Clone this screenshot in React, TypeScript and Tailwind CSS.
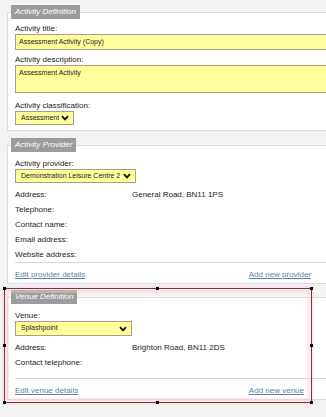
import React from 'react';

const font = { fontFamily: '"Liberation Sans", Arial, sans-serif' };

const Chevron: React.FC = () => (
  <svg width="8" height="6" viewBox="0 0 8 6" className="shrink-0">
    <path d="M1 1.2 L4 4.4 L7 1.2" fill="none" stroke="#111" strokeWidth="1.8" />
  </svg>
);

const Legend: React.FC<{ children: React.ReactNode }> = ({ children }) => (
  <legend className="ml-[-4px] h-[14px] px-[4px] bg-[#9c9c9c] text-white italic text-[8px] leading-[14px]">
    {children}
  </legend>
);

const Label: React.FC<{ children: React.ReactNode; className?: string }> = ({ children, className }) => (
  <div className={`h-[11px] text-[8px] leading-[12px] text-[#1c1c1c] ${className ?? ''}`}>{children}</div>
);

const Select: React.FC<{ value: string; width: string }> = ({ value, width }) => (
  <div className={`${width} flex items-center justify-between pl-[5px] pr-[4px] bg-[#ffff9c] border border-[#a79f8c] text-[7px] text-[#222]`}>
    <span className="truncate">{value}</span>
    <Chevron />
  </div>
);

const Row: React.FC<{ label: string; value?: string }> = ({ label, value }) => (
  <div className="grid grid-cols-[117px_1fr] h-[15px] text-[8px] leading-[15px] text-[#1c1c1c]">
    <span>{label}</span>
    <span>{value}</span>
  </div>
);

const Handle: React.FC<{ className: string }> = ({ className }) => (
  <span className={`absolute w-[3px] h-[3px] bg-black ${className}`} />
);

export default function App() {
  return (
    <div style={font} className="relative w-[326px] h-[417px] overflow-hidden bg-[#f3f3f3]">
      <div className="pt-[5px] pl-[7px] w-[345px]">
        {/* Activity Definition */}
        <fieldset className="border border-[#dcdcdc] bg-white pl-[7px] pb-[5px]">
          <Legend>Activity Definition</Legend>
          <Label className="mt-[4px]">Activity title:</Label>
          <div className="h-[16px] bg-[#ffff9c] border border-[#a79f8c] pl-[3px] text-[7px] leading-[14px] text-[#222]">
            Assessment Activity (Copy)
          </div>
          <Label className="mt-[4px]">Activity description:</Label>
          <div className="h-[28px] bg-[#ffff9c] border border-[#a79f8c] pl-[3px] pt-[2px] text-[7px] leading-[10px] text-[#222]">
            Assessment Activity
          </div>
          <Label className="mt-[7px]">Activity classification:</Label>
          <Select value="Assessment" width="w-[59px] h-[14px]" />
        </fieldset>

        {/* Activity Provider */}
        <fieldset className="mt-[7px] border border-[#dcdcdc] bg-white pl-[7px] pb-[1px]">
          <Legend>Activity Provider</Legend>
          <Label className="mt-[6px]">Activity provider:</Label>
          <Select value="Demonstration Leisure Centre 2" width="w-[121px] h-[14px]" />
          <div className="mt-[4px]">
            <Row label="Address:" value="General Road, BN11 1PS" />
            <Row label="Telephone:" />
            <Row label="Contact name:" />
            <Row label="Email address:" />
            <Row label="Website address:" />
          </div>
          <div className="border-t border-[#d8d8d8]" />
          <div className="mt-[4px] w-[296px] flex justify-between h-[15px] text-[8px] leading-[15px] text-[#5f7fa7]">
            <a className="underline">Edit provider details</a>
            <a className="underline">Add new provider</a>
          </div>
        </fieldset>

        {/* Venue Definition */}
        <fieldset className="mt-[6px] border border-[#dcdcdc] bg-white pl-[7px] pb-[1px]">
          <Legend>Venue Definition</Legend>
          <Label className="mt-[6px]">Venue:</Label>
          <Select value="Splashpoint" width="w-[117px] h-[15px]" />
          <div className="mt-[4px]">
            <Row label="Address:" value="Brighton Road, BN11 2DS" />
            <Row label="Contact telephone:" />
          </div>
          <div className="border-t border-[#d8d8d8] mt-[8px]" />
          <div className="mt-[4px] w-[289px] flex justify-between h-[15px] text-[8px] leading-[15px] text-[#5f7fa7]">
            <a className="underline">Edit venue details</a>
            <a className="underline">Add new venue</a>
          </div>
        </fieldset>
      </div>

      {/* selection overlay */}
      <div className="absolute left-[4px] top-[288px] w-[308px] h-[115px] border border-[#6b4026] shadow-[0_0_0_2px_rgba(255,200,222,0.35),inset_0_0_0_4px_rgba(255,200,222,0.4)] pointer-events-none">
        <Handle className="left-[-2px] top-[-2px]" />
        <Handle className="left-[151px] top-[-2px]" />
        <Handle className="right-[-2px] top-[-2px]" />
        <Handle className="left-[-2px] top-[55px]" />
        <Handle className="right-[-2px] top-[55px]" />
        <Handle className="left-[-2px] bottom-[-2px]" />
        <Handle className="left-[151px] bottom-[-2px]" />
        <Handle className="right-[-2px] bottom-[-2px]" />
      </div>
    </div>
  );
}
